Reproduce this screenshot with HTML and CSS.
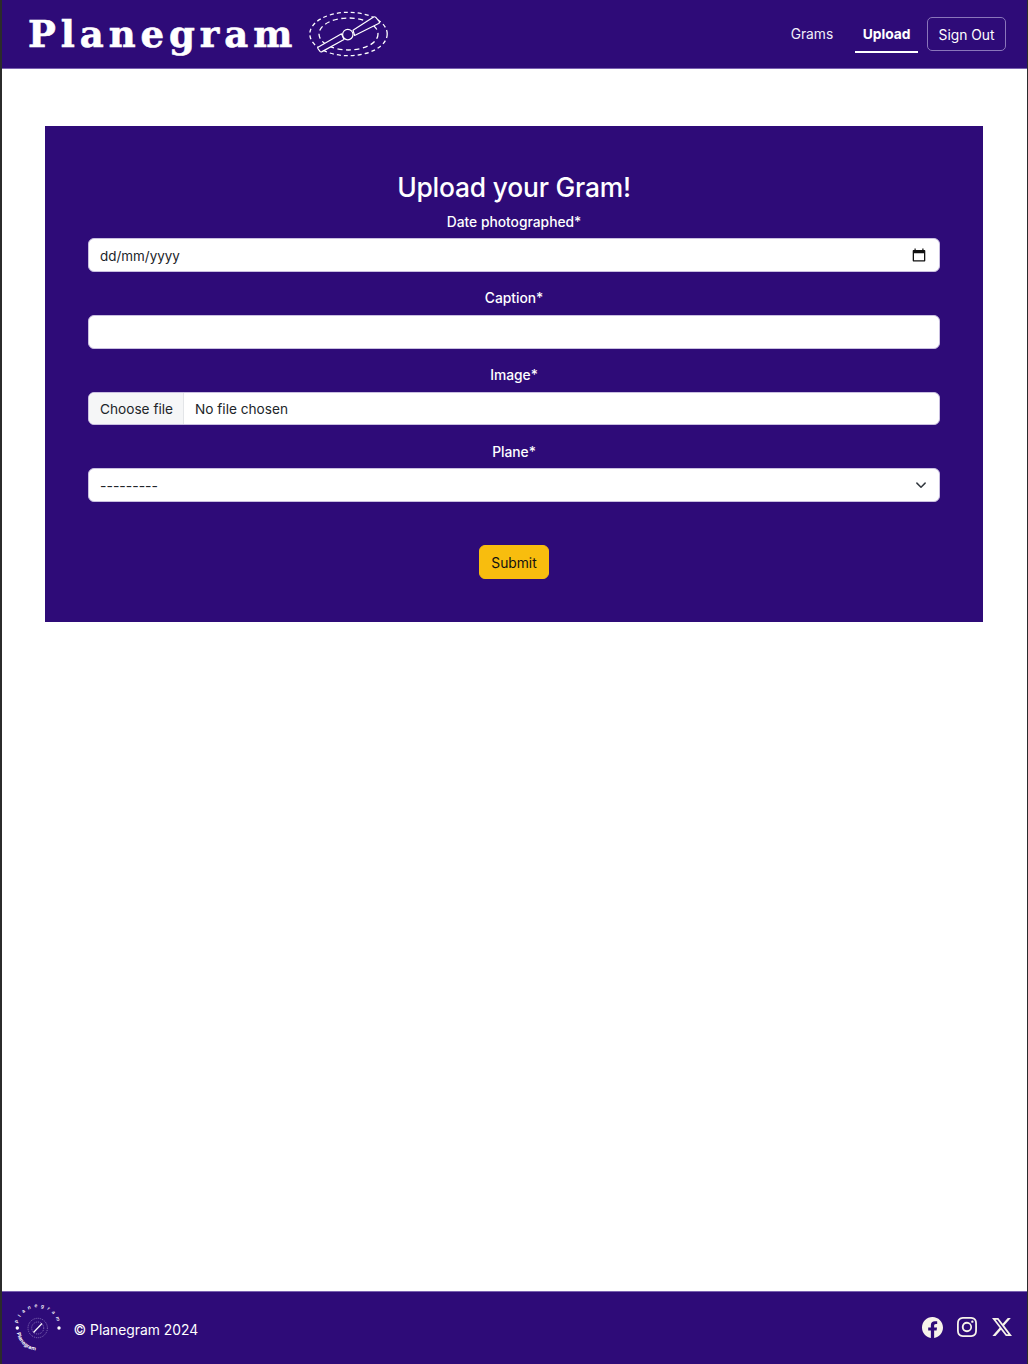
FILE: index.html
```html
<!DOCTYPE html>
<html lang="en">
<head>
<meta charset="utf-8">
<title>Planegram</title>
<link rel="stylesheet" href="styles.css">
</head>
<body>
<div class="page">
  <header class="topbar">
    <a class="brand" href="#">
      <span class="brand-name">Planegram</span>
      <svg class="brand-mark" viewBox="0 0 80 46" width="80" height="46" aria-hidden="true">
        <ellipse class="dash-outer" cx="39.5" cy="23" rx="38.7" ry="21.7"/>
        <ellipse class="dash-inner" cx="39.5" cy="23" rx="29.5" ry="16"/>
        <path class="blade" d="M9 36.2 Q8.6 37 9.2 38 L11 40.4 Q11.8 41.2 13 40.6 L35 28.5 L32.5 22.8 Z"/>
        <path class="blade" d="M44 19.3 L45.6 24.5 L69.6 12.5 Q71 11.5 70.2 10.4 L66.6 6.2 Q65.6 5.4 64.6 6 Z"/>
        <circle class="blade" cx="38.8" cy="23.6" r="5.2"/>
      </svg>
    </a>
    <nav class="nav">
      <a class="nav-link" href="#">Grams</a>
      <a class="nav-link active" href="#">Upload</a>
      <a class="nav-button" href="#">Sign Out</a>
    </nav>
  </header>

  <main class="content">
    <form class="card">
      <h1 class="card-title">Upload your Gram!</h1>

      <div class="field">
        <label class="field-label">Date photographed*</label>
        <div class="control control-row">
          <span class="date-value">dd/mm/yyyy</span>
          <svg class="calendar" viewBox="0 0 14 14" width="14" height="14" aria-hidden="true">
            <path d="M2.5 0.5h1.2V2h6.6V0.5h1.2V2h.8c.6 0 1 .4 1 1v9.5c0 .6-.4 1-1 1H1.7c-.6 0-1-.4-1-1V3c0-.6.4-1 1-1h.8zM2 5.2v7h10v-7z"/>
          </svg>
        </div>
      </div>

      <div class="field">
        <label class="field-label" for="caption">Caption*</label>
        <input class="control" id="caption" type="text">
      </div>

      <div class="field">
        <label class="field-label">Image*</label>
        <div class="control control-file">
          <span class="file-button">Choose file</span>
          <span class="file-name">No file chosen</span>
        </div>
      </div>

      <div class="field">
        <label class="field-label">Plane*</label>
        <div class="control control-row">
          <span class="select-value">---------</span>
          <svg class="chevron" viewBox="0 0 16 16" width="12" height="12" aria-hidden="true">
            <path d="M2.5 5.5 8 11l5.5-5.5"/>
          </svg>
        </div>
      </div>

      <button class="submit" type="button">Submit</button>
    </form>
  </main>

  <footer class="footer">
    <div class="footer-left">
      <svg class="footer-logo" viewBox="0 0 50 50" width="50" height="50" aria-hidden="true">
        <defs>
          <path id="arc-top" d="M5.2 20.5 A20 20 0 0 1 44.5 20.5"/>
          <path id="arc-bottom" d="M3.8 30 A21.5 21.5 0 0 0 25 47.5"/>
        </defs>
        <text class="arc-text arc-spaced"><textPath href="#arc-top">Planegram</textPath></text>
        <text class="arc-text arc-bold"><textPath href="#arc-bottom">Planegram</textPath></text>
        <circle class="dot" cx="4.3" cy="25" r="1.7"/>
        <circle class="dot" cx="46" cy="25" r="1.7"/>
        <circle class="ring" cx="24.7" cy="25" r="9.7"/>
        <circle class="ring" cx="24.7" cy="25" r="6"/>
        <path class="prop" d="M20.5 29.5 L29 20.5"/>
      </svg>
      <span class="copyright">© Planegram 2024</span>
    </div>
    <div class="socials">
      <a href="#" class="social" aria-label="Facebook">
        <svg viewBox="0 0 16 16" width="21" height="21"><path d="M16 8.049c0-4.446-3.582-8.05-8-8.05C3.58 0-.002 3.603-.002 8.05c0 4.017 2.926 7.347 6.75 7.951v-5.625h-2.03V8.05H6.75V6.275c0-2.017 1.195-3.131 3.022-3.131.876 0 1.791.157 1.791.157v1.98h-1.009c-.993 0-1.303.621-1.303 1.258v1.51h2.218l-.354 2.326H9.25V16c3.824-.604 6.75-3.934 6.75-7.951"/></svg>
      </a>
      <a href="#" class="social" aria-label="Instagram">
        <svg viewBox="0 0 16 16" width="20" height="20"><path d="M8 0C5.829 0 5.556.01 4.703.048 3.85.088 3.269.222 2.76.42a3.9 3.9 0 0 0-1.417.923A3.9 3.9 0 0 0 .42 2.76C.222 3.268.087 3.85.048 4.7.01 5.555 0 5.827 0 8.001c0 2.172.01 2.444.048 3.297.04.852.174 1.433.372 1.942.205.526.478.972.923 1.417.444.445.89.719 1.416.923.51.198 1.09.333 1.942.372C5.555 15.99 5.827 16 8 16s2.444-.01 3.298-.048c.851-.04 1.434-.174 1.943-.372a3.9 3.9 0 0 0 1.416-.923c.445-.445.718-.891.923-1.417.197-.509.332-1.09.372-1.942C15.99 10.445 16 10.173 16 8s-.01-2.445-.048-3.299c-.04-.851-.175-1.433-.372-1.941a3.9 3.9 0 0 0-.923-1.417A3.9 3.9 0 0 0 13.24.42c-.51-.198-1.092-.333-1.943-.372C10.443.01 10.172 0 7.998 0zm-.717 1.442h.718c2.136 0 2.389.007 3.232.046.78.035 1.204.166 1.486.275.373.145.64.319.92.599s.453.546.598.92c.11.281.24.705.275 1.485.039.843.047 1.096.047 3.231s-.008 2.389-.047 3.232c-.035.78-.166 1.203-.275 1.485a2.5 2.5 0 0 1-.599.919c-.28.28-.546.453-.92.598-.28.11-.704.24-1.485.276-.843.038-1.096.047-3.232.047s-2.39-.009-3.233-.047c-.78-.036-1.203-.166-1.485-.276a2.5 2.5 0 0 1-.92-.598 2.5 2.5 0 0 1-.6-.92c-.109-.281-.24-.705-.275-1.485-.038-.843-.046-1.096-.046-3.233s.008-2.388.046-3.231c.036-.78.166-1.204.276-1.486.145-.373.319-.64.599-.92s.546-.453.92-.598c.282-.11.705-.24 1.485-.276.738-.034 1.024-.044 2.515-.045zm4.988 1.328a.96.96 0 1 0 0 1.92.96.96 0 0 0 0-1.92m-4.27 1.122a4.109 4.109 0 1 0 0 8.217 4.109 4.109 0 0 0 0-8.217m0 1.441a2.667 2.667 0 1 1 0 5.334 2.667 2.667 0 0 1 0-5.334"/></svg>
      </a>
      <a href="#" class="social social-x" aria-label="X">
        <svg viewBox="0 0 16 16" width="20" height="20"><path d="M12.6.75h2.454l-5.36 6.142L16 15.25h-4.937l-3.867-5.07-4.425 5.07H.316l5.733-6.57L0 .75h5.063l3.495 4.633L12.601.75Zm-.86 13.028h1.36L4.323 2.145H2.865z"/></svg>
      </a>
    </div>
  </footer>
</div>
</body>
</html>
```

FILE: styles.css
```css
* { box-sizing: border-box; }

html, body { margin: 0; height: 100%; }

body {
  background: #fff;
  color: #fff;
  font-family: Inter, "Liberation Sans", sans-serif;
  font-size: 13.8px;
}

a { color: inherit; text-decoration: none; }

.page {
  display: flex;
  flex-direction: column;
  height: 1364px;
  border-left: 2px solid #2b2b2b;
  border-right: 1px solid #2b2b2b;
}

.topbar {
  height: 69px;
  flex: none;
  display: flex;
  align-items: center;
  justify-content: space-between;
  background: #2e0b78;
  border-bottom: 1px solid #7a62b0;
  padding: 0 21px 1px 26px;
}

.brand { display: flex; align-items: center; gap: 11.5px; }

.brand-name {
  font-family: "DejaVu Serif", serif;
  font-weight: 700;
  font-size: 37px;
  line-height: 44px;
  letter-spacing: 4.95px;
  color: #fff;
  -webkit-text-stroke: .6px #fff;
}

.brand-mark { display: block; }

.dash-outer, .dash-inner {
  fill: none;
  stroke: #fff;
  stroke-width: 1.3;
  stroke-dasharray: 4 3;
}
.dash-inner { stroke-dasharray: 5 3.5; }
.blade { fill: #2e0b78; stroke: #fff; stroke-width: 1.2; stroke-linejoin: round; }

.nav { display: flex; align-items: center; }

.nav-link {
  display: block;
  padding: 10px 7.5px 6px;
  margin: 2px 14.5px 3px 0;
  line-height: 21px;
  color: #f2eff8;
  border-bottom: 2px solid transparent;
}

.nav-link.active {
  font-weight: 700;
  color: #fff;
  border-bottom-color: #fff;
  margin-right: 9px;
}

.nav-button {
  display: block;
  height: 34px;
  padding: 0 10.5px;
  line-height: 35px;
  border: 1px solid #8a76bb;
  border-radius: 5px;
  color: #fff;
}

.content { flex: 1; padding: 57px 44px 0 43px; }

.card {
  background: #2e0b78;
  height: 496px;
  padding: 43px 43px 0;
  display: flex;
  flex-direction: column;
  align-items: center;
}

.card-title {
  margin: 0 0 1px;
  font-size: 26.4px;
  line-height: 37px;
  font-weight: 500;
  letter-spacing: -.2px;
}

.field {
  width: 100%;
  height: 76.67px;
  display: flex;
  flex-direction: column;
  align-items: center;
}

.field-label {
  display: block;
  line-height: 21px;
  margin: 4.7px 0 5.8px;
  font-weight: 500;
}

.control {
  width: 100%;
  height: 33.5px;
  flex: none;
  border: 1px solid #c9bfe0;
  border-radius: 6px;
  background: #fff;
  color: #212529;
  font: inherit;
  font-size: 13.65px;
  padding: 0 11px;
  display: block;
}

.control-row {
  display: flex;
  align-items: center;
  justify-content: space-between;
}

.date-value { font-size: 13.45px; padding-top: 1px; }
.select-value { font-size: 14px; padding-top: 1px; }

.calendar { fill: #111; margin-right: 2px; }

.chevron {
  fill: none;
  stroke: #343a40;
  stroke-width: 2;
  stroke-linecap: round;
  stroke-linejoin: round;
  margin-right: 1px;
}

.control-file {
  display: flex;
  align-items: stretch;
  padding: 0;
  overflow: hidden;
}

.file-button {
  display: flex;
  align-items: center;
  padding: 0 10px 0 11px;
  background: #f5f6f7;
  border-right: 1px solid #e3e5e8;
}

.file-name { display: flex; align-items: center; padding-left: 11px; }

.submit {
  margin-top: 31.5px;
  width: 70px;
  height: 34px;
  padding: 2px 0 0;
  border: 1px solid #f8bd0e;
  border-radius: 6px;
  background: #f8bd0e;
  color: #111;
  font: inherit;
}

.footer {
  flex: none;
  height: 73px;
  display: flex;
  align-items: center;
  justify-content: space-between;
  background: #2e0b78;
  border-top: 1px solid #7a62b0;
  padding: 0 15px 0 11px;
}

.footer-left { display: flex; align-items: center; gap: 10.5px; }

.footer-logo { display: block; }

.copyright { color: #fff; font-size: 13.85px; margin-top: 3px; }

.arc-text { fill: #fff; font-family: Inter, sans-serif; font-size: 4.8px; }
.arc-spaced { letter-spacing: 3.5px; font-weight: 600; }
.arc-bold { font-weight: 700; font-size: 5.2px; }
.dot { fill: #fff; }
.ring { fill: none; stroke: #a897cf; stroke-width: .7; stroke-dasharray: 1 1; }
.prop { stroke: #fff; stroke-width: 1.2; fill: none; }

.socials { display: flex; align-items: center; gap: 14px; margin-top: -2px; }

.social { display: block; }
.social-x { margin-left: 1px; }
.social svg { display: block; fill: #f7f3ea; }
```
